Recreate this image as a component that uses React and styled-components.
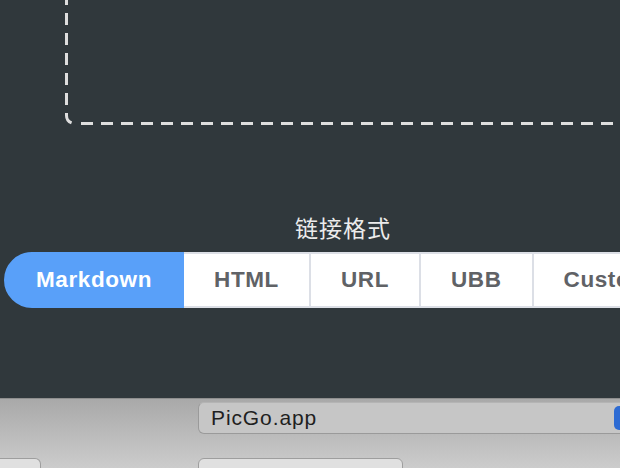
import React from 'react';
import styled, { createGlobalStyle } from 'styled-components';

const GlobalStyle = createGlobalStyle`
  html, body {
    margin: 0;
    padding: 0;
    background: #30383c;
    overflow: hidden;
  }
`;

// Whole window crop
const Window = styled.div`
  width: 620px;
  height: 468px;
  overflow: hidden;
  display: flex;
  flex-direction: column;
`;

// Dark app area
const Panel = styled.div`
  height: 398px;
  flex-shrink: 0;
  background: #30383c;
  overflow: hidden;
`;

const Stage = styled.div`
  width: 686px;
  display: flex;
  flex-direction: column;
  align-items: center;
`;

// Upload drop zone, only its lower left part shows
const DropZone = styled.div`
  position: relative;
  align-self: flex-start;
  margin-left: 64px;
  width: 700px;
  height: 126px;
`;

const DashOutline = styled.svg`
  position: absolute;
  inset: 0;
`;

const Title = styled.div`
  margin-top: 86px;
  height: 30px;
  line-height: 30px;
  font-family: "Noto Sans CJK SC", "Noto Sans", sans-serif;
  font-size: 23px;
  color: #ececec;
  letter-spacing: 1px;
`;

const Group = styled.div`
  align-self: flex-start;
  margin-left: 4px;
  margin-top: 10px;
  display: flex;
`;

const Tab = styled.div`
  box-sizing: border-box;
  height: 56px;
  padding: 0 30px;
  display: flex;
  align-items: center;
  font-family: "Liberation Sans", Arial, sans-serif;
  font-weight: bold;
  font-size: 22.5px;
  letter-spacing: 0.6px;
  white-space: nowrap;
  border: 2px solid #dcdfe6;
  border-left: 0;
  background: #fff;
  color: #606266;

  &:first-child {
    border-left: 2px solid #dcdfe6;
    border-radius: 28px 0 0 28px;
  }

  ${(p) => p.active && `
    background: #59a0f9;
    border-color: #59a0f9 !important;
    color: #fff;
  `}
`;

// macOS style bottom sheet
const BottomBar = styled.div`
  flex: 1;
  box-sizing: border-box;
  border-top: 1px solid #8e8e8e;
  background: linear-gradient(#a9a9a9, #d6d6d6);
  padding-top: 3px;
  display: flex;
  flex-direction: column;
`;

const Field = styled.div`
  box-sizing: border-box;
  margin-left: 198px;
  width: 442px;
  height: 32px;
  border-radius: 6px;
  border: 1px solid #9a9a9a;
  border-top-color: #b4b4b4;
  background: #c6c6c6;
  display: flex;
  align-items: center;
  padding-left: 12px;
`;

const FieldText = styled.span`
  flex: 1;
  font-family: "Liberation Sans", Arial, sans-serif;
  font-size: 21px;
  letter-spacing: 0.9px;
  color: #1f1f1f;
`;

const PopupButton = styled.span`
  width: 22px;
  height: 24px;
  margin-right: 3px;
  border-radius: 5px;
  background: #2d6bd3;
`;

const ButtonRow = styled.div`
  margin-top: 24px;
  display: flex;
`;

const SheetButton = styled.div`
  box-sizing: border-box;
  height: 30px;
  width: ${(p) => p.w}px;
  margin-left: ${(p) => p.ml || 0}px;
  background: #e0e0e0;
  border: 1.5px solid #9e9e9e;
  border-radius: 6px;
  ${(p) => p.cut && `
    border-left: 0;
    border-radius: 0 6px 0 0;
  `}
`;

const formats = ['Markdown', 'HTML', 'URL', 'UBB', 'Custom'];

export default function App() {
  return (
    <Window>
      <GlobalStyle />
      <Panel>
        <Stage>
          <DropZone>
            <DashOutline width="700" height="126" viewBox="0 0 700 126">
              <path
                d="M2.5 0 V115.5 A8 8 0 0 0 10.5 123.5"
                fill="none"
                stroke="#dedede"
                strokeWidth="3"
                strokeDasharray="12 8"
                strokeDashoffset="7"
              />
              <path
                d="M10.5 123.5 H700"
                fill="none"
                stroke="#dedede"
                strokeWidth="3"
                strokeDasharray="12 8"
                strokeDashoffset="13.5"
              />
            </DashOutline>
          </DropZone>
          <Title>链接格式</Title>
          <Group>
            {formats.map((f) => (
              <Tab key={f} active={f === 'Markdown'}>{f}</Tab>
            ))}
          </Group>
        </Stage>
      </Panel>
      <BottomBar>
        <Field>
          <FieldText>PicGo.app</FieldText>
          <PopupButton />
        </Field>
        <ButtonRow>
          <SheetButton w={41} cut />
          <SheetButton w={205} ml={157} />
        </ButtonRow>
      </BottomBar>
    </Window>
  );
}
